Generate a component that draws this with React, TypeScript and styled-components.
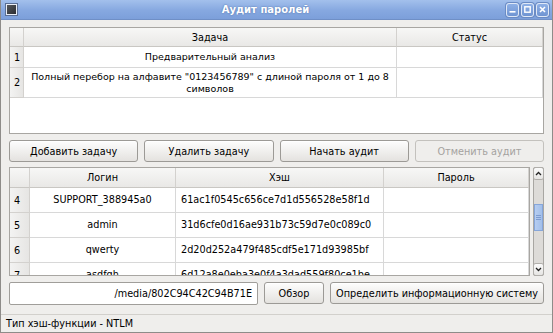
import React from 'react';
import styled, { createGlobalStyle } from 'styled-components';

const GlobalStyle = createGlobalStyle`
  html, body {
    margin: 0;
    padding: 0;
    background: #efeeec;
  }
  body {
    font-family: 'DejaVu Sans', 'Liberation Sans', sans-serif;
    font-size: 9.7px;
    color: #000;
  }
`;

const Frame = styled.div`
  width: 553px;
  height: 333px;
  box-sizing: border-box;
  border: 1px solid #8e8c89;
  border-top: none;
  background: #efeeec;
  display: flex;
  flex-direction: column;
  overflow: hidden;
`;

const TitleBar = styled.div`
  height: 20px;
  flex-shrink: 0;
  display: flex;
  align-items: center;
  padding: 0 3px 0 5px;
  background: linear-gradient(#a3c0ec, #86a8e0 55%, #7c9fda);
  border-bottom: 1px solid #6f8fc6;
  box-sizing: border-box;
`;

const AppIcon = styled.span`
  width: 11px;
  height: 11px;
  box-sizing: border-box;
  border: 1px solid #e9eef6;
  background: linear-gradient(135deg, #56595e, #2b2d31);
  box-shadow: 0 0 0 1px #5a6f95;
`;

const Title = styled.div`
  flex: 1;
  text-align: center;
  color: #fff;
  font-weight: bold;
  font-size: 10px;
  text-shadow: 0 0 2px #4d6ea6;
  padding-left: 8px;
`;

const WinButtons = styled.div`
  display: flex;
  gap: 2px;
`;

const WinButton = styled.span`
  width: 13px;
  height: 14px;
  box-sizing: border-box;
  border: 1px solid #dfe8f6;
  border-radius: 3px;
  background: linear-gradient(#8eb0e6, #6f94d2);
  display: flex;
  align-items: center;
  justify-content: center;
  box-shadow: 0 0 0 1px #6a8bc4;
`;

const Content = styled.div`
  flex: 1;
  display: flex;
  flex-direction: column;
  padding: 7px 8px 0 8px;
  min-height: 0;
`;

const TableFrame = styled.div<{ $height: number }>`
  height: ${(p) => p.$height}px;
  box-sizing: border-box;
  border: 1px solid #a8a6a2;
  background: #fff;
  overflow: hidden;
  flex: 1;
`;

const Grid = styled.div<{ $cols: string }>`
  display: grid;
  grid-template-columns: ${(p) => p.$cols};
`;

const HeadCell = styled.div<{ $h: number }>`
  height: ${(p) => p.$h}px;
  box-sizing: border-box;
  display: flex;
  align-items: center;
  justify-content: center;
  background: linear-gradient(#f7f7f6, #e9e8e6);
  border-right: 1px solid #d3d1ce;
  border-bottom: 1px solid #c9c7c3;
  white-space: nowrap;
`;

const RowHead = styled.div<{ $h: number }>`
  height: ${(p) => p.$h}px;
  box-sizing: border-box;
  display: flex;
  align-items: center;
  padding-left: 4px;
  background: linear-gradient(90deg, #f3f3f2, #e6e5e3);
  border-right: 1px solid #d3d1ce;
  border-bottom: 1px solid #d3d1ce;
`;

const Cell = styled.div<{ $h: number; $align?: 'left' | 'center' }>`
  height: ${(p) => p.$h}px;
  box-sizing: border-box;
  display: flex;
  align-items: center;
  justify-content: ${(p) => (p.$align === 'left' ? 'flex-start' : 'center')};
  padding: 0 ${(p) => (p.$align === 'left' ? 5 : 0)}px;
  line-height: 12px;
  border-right: 1px solid #d8d8d8;
  border-bottom: 1px solid #d8d8d8;
  white-space: nowrap;
  min-width: 0;
  overflow: hidden;
`;

const TaskCell = styled.div<{ $h: number }>`
  height: ${(p) => p.$h}px;
  box-sizing: border-box;
  display: flex;
  flex-direction: column;
  justify-content: center;
  line-height: 12px;
  border-right: 1px solid #d8d8d8;
  border-bottom: 1px solid #d8d8d8;
  min-width: 0;
  overflow: hidden;
`;

const TaskLine = styled.div`
  width: 100%;
  text-align: center;
  white-space: nowrap;
  font-size: 9.5px;
`;

const ButtonRow = styled.div`
  display: grid;
  grid-template-columns: repeat(4, 1fr);
  gap: 6px;
  margin-top: 6px;
`;

const Button = styled.button<{ $width?: number }>`
  height: 22px;
  ${(p) => (p.$width ? `width: ${p.$width}px; flex-shrink: 0;` : '')}
  padding: 0;
  font-family: inherit;
  font-size: 9.7px;
  color: #000;
  border: 1px solid #9c9a96;
  border-radius: 3px;
  background: linear-gradient(#fdfdfd, #eeedeb 60%, #e4e2df);
  box-shadow: inset 0 1px 0 #fff;

  &:disabled {
    color: #a4a29f;
    border-color: #c3c1bd;
    background: #efeeec;
    box-shadow: none;
  }
`;

const HashArea = styled.div`
  display: flex;
  gap: 3px;
  margin-top: 5px;
  height: 109px;
`;

const ScrollBar = styled.div`
  width: 11px;
  flex-shrink: 0;
  display: flex;
  flex-direction: column;
  box-sizing: border-box;
  border: 1px solid #a8a6a2;
  border-radius: 2px;
  background: #dddbd8;
`;

const ScrollArrow = styled.div`
  height: 11px;
  flex-shrink: 0;
  display: flex;
  align-items: center;
  justify-content: center;
  background: linear-gradient(#fbfbfb, #e6e5e3);
  border-radius: 2px;
  box-shadow: 0 0 0 1px #b0aeaa;
`;

const Track = styled.div`
  flex: 1;
  padding: 25px 0 0;
  display: flex;
  flex-direction: column;
`;

const Handle = styled.div`
  height: 27px;
  box-sizing: border-box;
  border: 1px solid #86a6da;
  background: linear-gradient(90deg, #b6cdf1, #a2bfea);
  display: flex;
  flex-direction: column;
  align-items: center;
  justify-content: center;
  gap: 1px;
`;

const Grip = styled.span`
  width: 5px;
  height: 1px;
  background: #7d9bd0;
`;

const PathRow = styled.div`
  display: flex;
  gap: 6px;
  margin-top: 6px;
  height: 23px;
`;

const PathInput = styled.input`
  flex: 1;
  min-width: 0;
  height: 23px;
  box-sizing: border-box;
  border: 1px solid #a09e9a;
  border-radius: 2px;
  background: #fff;
  font-family: inherit;
  font-size: 9.7px;
  text-align: right;
  padding: 0 5px;
  color: #000;
  outline: none;
`;

const StatusBar = styled.div`
  margin-top: 7px;
  border-top: 1px solid #d2d0cc;
  padding: 3px 5px 0;
  height: 18px;
  box-sizing: border-box;
`;

const tasks = [
  { n: 1, h: 21, lines: ['Предварительный анализ'] },
  {
    n: 2,
    h: 30,
    lines: ['Полный перебор на алфавите "0123456789" с длиной пароля от 1 до 8', 'символов'],
  },
];

const hashes = [
  { n: 4, login: 'SUPPORT_388945a0', hash: '61ac1f0545c656ce7d1d556528e58f1d' },
  { n: 5, login: 'admin', hash: '31d6cfe0d16ae931b73c59d7e0c089c0' },
  { n: 6, login: 'qwerty', hash: '2d20d252a479f485cdf5e171d93985bf' },
  { n: 7, login: 'asdfgh', hash: '6d12a8e0eba3e0f4a3dad559f80ce1be' },
];

const Chevron = ({ up }: { up?: boolean }) => (
  <svg width="7" height="5" viewBox="0 0 7 5">
    <path
      d={up ? 'M1 4 L3.5 1.5 L6 4' : 'M1 1 L3.5 3.5 L6 1'}
      fill="none"
      stroke="#222"
      strokeWidth="1.3"
    />
  </svg>
);

const App = () => (
  <>
    <GlobalStyle />
    <Frame>
      <TitleBar>
        <AppIcon />
        <Title>Аудит паролей</Title>
        <WinButtons>
          <WinButton>
            <svg width="7" height="7" viewBox="0 0 7 7">
              <rect x="0.5" y="5" width="6" height="1.6" fill="#fff" />
            </svg>
          </WinButton>
          <WinButton>
            <svg width="7" height="7" viewBox="0 0 7 7">
              <rect x="0.8" y="0.8" width="5.4" height="5.4" fill="none" stroke="#fff" strokeWidth="1.4" />
            </svg>
          </WinButton>
          <WinButton>
            <svg width="7" height="7" viewBox="0 0 7 7">
              <path d="M1 1 L6 6 M6 1 L1 6" stroke="#fff" strokeWidth="1.6" />
            </svg>
          </WinButton>
        </WinButtons>
      </TitleBar>

      <Content>
        <TableFrame $height={107} style={{ flex: 'none' }}>
          <Grid $cols="14px 373px 1fr">
            <HeadCell $h={19} />
            <HeadCell $h={19}>Задача</HeadCell>
            <HeadCell $h={19}>Статус</HeadCell>
            {tasks.map((t) => (
              <React.Fragment key={t.n}>
                <RowHead $h={t.h}>{t.n}</RowHead>
                <TaskCell $h={t.h}>
                  {t.lines.map((l) => (
                    <TaskLine key={l}>{l}</TaskLine>
                  ))}
                </TaskCell>
                <Cell $h={t.h} />
              </React.Fragment>
            ))}
          </Grid>
        </TableFrame>

        <ButtonRow>
          <Button>Добавить задачу</Button>
          <Button>Удалить задачу</Button>
          <Button>Начать аудит</Button>
          <Button disabled>Отменить аудит</Button>
        </ButtonRow>

        <HashArea>
          <TableFrame $height={109}>
            <Grid $cols="20px 146px 208px 1fr">
              <HeadCell $h={20} />
              <HeadCell $h={20}>Логин</HeadCell>
              <HeadCell $h={20}>Хэш</HeadCell>
              <HeadCell $h={20}>Пароль</HeadCell>
              {hashes.map((r) => (
                <React.Fragment key={r.n}>
                  <RowHead $h={25}>{r.n}</RowHead>
                  <Cell $h={25}>{r.login}</Cell>
                  <Cell $h={25} $align="left">
                    {r.hash}
                  </Cell>
                  <Cell $h={25} />
                </React.Fragment>
              ))}
            </Grid>
          </TableFrame>
          <ScrollBar>
            <ScrollArrow>
              <Chevron up />
            </ScrollArrow>
            <Track>
              <Handle>
                <Grip />
                <Grip />
                <Grip />
              </Handle>
            </Track>
            <ScrollArrow>
              <Chevron />
            </ScrollArrow>
          </ScrollBar>
        </HashArea>

        <PathRow>
          <PathInput readOnly value="/media/802C94C42C94B71E" />
          <Button $width={60}>Обзор</Button>
          <Button $width={214}>Определить информационную систему</Button>
        </PathRow>
      </Content>

      <StatusBar>Тип хэш-функции - NTLM</StatusBar>
    </Frame>
  </>
);

export default App;
